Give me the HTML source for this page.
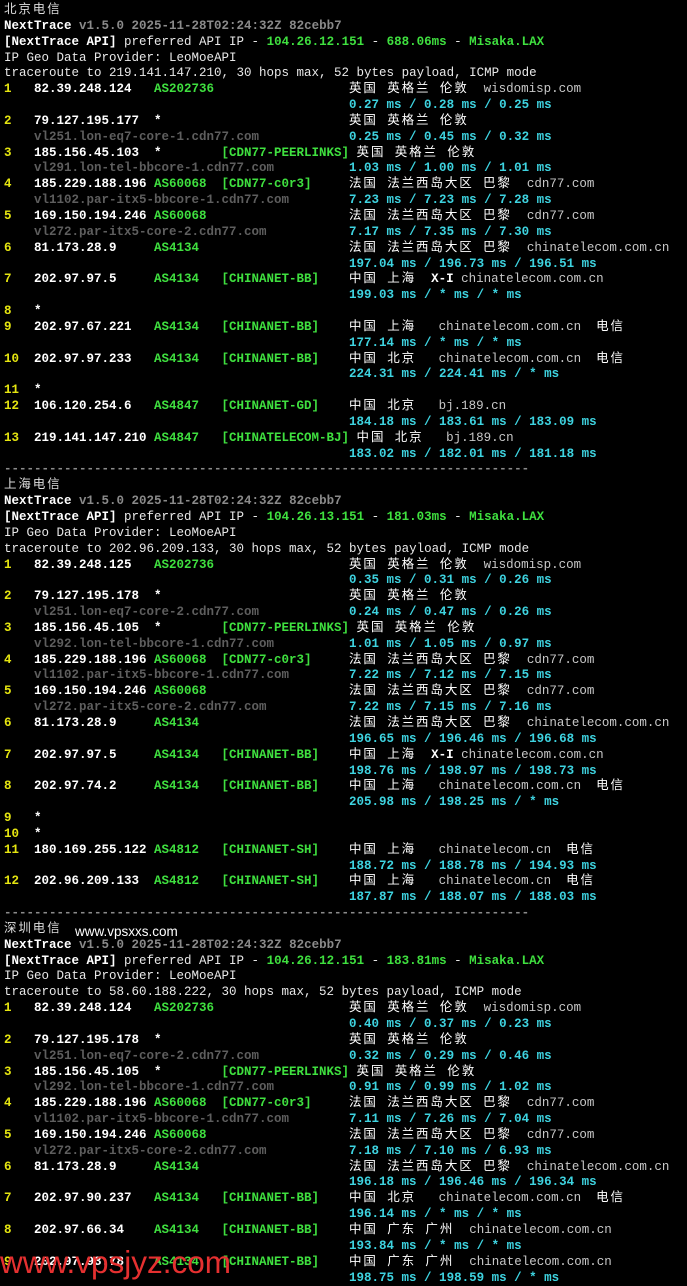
<!DOCTYPE html>
<html><head><meta charset="utf-8"><style>
body{margin:0;background:#000;width:687px;height:1280px;overflow:hidden;position:relative}
#t{position:absolute;left:4px;top:3px;font-family:"Liberation Mono","Noto Sans CJK SC",monospace;font-size:12.5px;line-height:15.857px;color:#e8e8e8}
.l{height:15.857px;white-space:pre;overflow:visible}
.y{color:#e5e510;font-weight:bold}
.w{color:#fff;font-weight:bold}
.g{color:#3fe03f;font-weight:bold}
.c{color:#3ed3e0;font-weight:bold}
.h{color:#c8c8c8}
.d{color:#5e5e5e;font-weight:bold}
.gr{color:#8a8a8a;font-weight:bold}
.z{letter-spacing:1.9px;color:#fff}
.n,.ip,.as,.br{display:inline-block}
.n{width:4ch}.ip{width:16ch}.as{width:9ch}.br{min-width:17ch}
.m{margin-left:46ch}.s{margin-left:4ch}
.sec{letter-spacing:1.9px;color:#ddd}
#wm{position:absolute;left:75px;top:924px;font-family:"Liberation Sans",sans-serif;font-size:13.5px;color:#fff}
#rd{position:absolute;left:0;top:1244px;font-family:"Liberation Sans",sans-serif;font-size:31.5px;color:#e53030}
</style></head><body><div id="t">
<div class="l"><span class="sec">北京电信</span></div>
<div class="l"><span class="w">NextTrace</span> <span class="gr">v1.5.0 2025-11-28T02:24:32Z 82cebb7</span></div>
<div class="l"><span class="w">[NextTrace API]</span> preferred API IP - <span class="g">104.26.12.151</span> - <span class="g">688.06ms</span> - <span class="g">Misaka.LAX</span></div>
<div class="l">IP Geo Data Provider: LeoMoeAPI</div>
<div class="l">traceroute to 219.141.147.210, 30 hops max, 52 bytes payload, ICMP mode</div>
<div class="l"><span class="n y">1</span><span class="ip w">82.39.248.124</span><span class="as g">AS202736</span><span class="br"></span><span class="z">英国 英格兰 伦敦</span>  <span class="h">wisdomisp.com</span></div>
<div class="l"><span class="m c">0.27 ms / 0.28 ms / 0.25 ms</span></div>
<div class="l"><span class="n y">2</span><span class="ip w">79.127.195.177</span><span class="as w">*</span><span class="br"></span><span class="z">英国 英格兰 伦敦</span></div>
<div class="l"><span class="s d">vl251.lon-eq7-core-1.cdn77.com</span><span style="margin-left:12ch" class="c">0.25 ms / 0.45 ms / 0.32 ms</span></div>
<div class="l"><span class="n y">3</span><span class="ip w">185.156.45.103</span><span class="as w">*</span><span class="br g">[CDN77-PEERLINKS] </span><span class="z">英国 英格兰 伦敦</span></div>
<div class="l"><span class="s d">vl291.lon-tel-bbcore-1.cdn77.com</span><span style="margin-left:10ch" class="c">1.03 ms / 1.00 ms / 1.01 ms</span></div>
<div class="l"><span class="n y">4</span><span class="ip w">185.229.188.196</span><span class="as g">AS60068</span><span class="br g">[CDN77-c0r3]</span><span class="z">法国 法兰西岛大区 巴黎</span>  <span class="h">cdn77.com</span></div>
<div class="l"><span class="s d">vl1102.par-itx5-bbcore-1.cdn77.com</span><span style="margin-left:8ch" class="c">7.23 ms / 7.23 ms / 7.28 ms</span></div>
<div class="l"><span class="n y">5</span><span class="ip w">169.150.194.246</span><span class="as g">AS60068</span><span class="br"></span><span class="z">法国 法兰西岛大区 巴黎</span>  <span class="h">cdn77.com</span></div>
<div class="l"><span class="s d">vl272.par-itx5-core-2.cdn77.com</span><span style="margin-left:11ch" class="c">7.17 ms / 7.35 ms / 7.30 ms</span></div>
<div class="l"><span class="n y">6</span><span class="ip w">81.173.28.9</span><span class="as g">AS4134</span><span class="br"></span><span class="z">法国 法兰西岛大区 巴黎</span>  <span class="h">chinatelecom.com.cn</span></div>
<div class="l"><span class="m c">197.04 ms / 196.73 ms / 196.51 ms</span></div>
<div class="l"><span class="n y">7</span><span class="ip w">202.97.97.5</span><span class="as g">AS4134</span><span class="br g">[CHINANET-BB]</span><span class="z">中国 上海</span>  <span class="w">X-I</span> <span class="h">chinatelecom.com.cn</span></div>
<div class="l"><span class="m c">199.03 ms / * ms / * ms</span></div>
<div class="l"><span class="n y">8</span><span class="w">*</span></div>
<div class="l"><span class="n y">9</span><span class="ip w">202.97.67.221</span><span class="as g">AS4134</span><span class="br g">[CHINANET-BB]</span><span class="z">中国 上海</span>   <span class="h">chinatelecom.com.cn</span>  <span class="z">电信</span></div>
<div class="l"><span class="m c">177.14 ms / * ms / * ms</span></div>
<div class="l"><span class="n y">10</span><span class="ip w">202.97.97.233</span><span class="as g">AS4134</span><span class="br g">[CHINANET-BB]</span><span class="z">中国 北京</span>   <span class="h">chinatelecom.com.cn</span>  <span class="z">电信</span></div>
<div class="l"><span class="m c">224.31 ms / 224.41 ms / * ms</span></div>
<div class="l"><span class="n y">11</span><span class="w">*</span></div>
<div class="l"><span class="n y">12</span><span class="ip w">106.120.254.6</span><span class="as g">AS4847</span><span class="br g">[CHINANET-GD]</span><span class="z">中国 北京</span>   <span class="h">bj.189.cn</span></div>
<div class="l"><span class="m c">184.18 ms / 183.61 ms / 183.09 ms</span></div>
<div class="l"><span class="n y">13</span><span class="ip w">219.141.147.210</span><span class="as g">AS4847</span><span class="br g">[CHINATELECOM-BJ] </span><span class="z">中国 北京</span>   <span class="h">bj.189.cn</span></div>
<div class="l"><span class="m c">183.02 ms / 182.01 ms / 181.18 ms</span></div>
<div class="l"><span class="gr">----------------------------------------------------------------------</span></div>
<div class="l"><span class="sec">上海电信</span></div>
<div class="l"><span class="w">NextTrace</span> <span class="gr">v1.5.0 2025-11-28T02:24:32Z 82cebb7</span></div>
<div class="l"><span class="w">[NextTrace API]</span> preferred API IP - <span class="g">104.26.13.151</span> - <span class="g">181.03ms</span> - <span class="g">Misaka.LAX</span></div>
<div class="l">IP Geo Data Provider: LeoMoeAPI</div>
<div class="l">traceroute to 202.96.209.133, 30 hops max, 52 bytes payload, ICMP mode</div>
<div class="l"><span class="n y">1</span><span class="ip w">82.39.248.125</span><span class="as g">AS202736</span><span class="br"></span><span class="z">英国 英格兰 伦敦</span>  <span class="h">wisdomisp.com</span></div>
<div class="l"><span class="m c">0.35 ms / 0.31 ms / 0.26 ms</span></div>
<div class="l"><span class="n y">2</span><span class="ip w">79.127.195.178</span><span class="as w">*</span><span class="br"></span><span class="z">英国 英格兰 伦敦</span></div>
<div class="l"><span class="s d">vl251.lon-eq7-core-2.cdn77.com</span><span style="margin-left:12ch" class="c">0.24 ms / 0.47 ms / 0.26 ms</span></div>
<div class="l"><span class="n y">3</span><span class="ip w">185.156.45.105</span><span class="as w">*</span><span class="br g">[CDN77-PEERLINKS] </span><span class="z">英国 英格兰 伦敦</span></div>
<div class="l"><span class="s d">vl292.lon-tel-bbcore-1.cdn77.com</span><span style="margin-left:10ch" class="c">1.01 ms / 1.05 ms / 0.97 ms</span></div>
<div class="l"><span class="n y">4</span><span class="ip w">185.229.188.196</span><span class="as g">AS60068</span><span class="br g">[CDN77-c0r3]</span><span class="z">法国 法兰西岛大区 巴黎</span>  <span class="h">cdn77.com</span></div>
<div class="l"><span class="s d">vl1102.par-itx5-bbcore-1.cdn77.com</span><span style="margin-left:8ch" class="c">7.22 ms / 7.12 ms / 7.15 ms</span></div>
<div class="l"><span class="n y">5</span><span class="ip w">169.150.194.246</span><span class="as g">AS60068</span><span class="br"></span><span class="z">法国 法兰西岛大区 巴黎</span>  <span class="h">cdn77.com</span></div>
<div class="l"><span class="s d">vl272.par-itx5-core-2.cdn77.com</span><span style="margin-left:11ch" class="c">7.22 ms / 7.15 ms / 7.16 ms</span></div>
<div class="l"><span class="n y">6</span><span class="ip w">81.173.28.9</span><span class="as g">AS4134</span><span class="br"></span><span class="z">法国 法兰西岛大区 巴黎</span>  <span class="h">chinatelecom.com.cn</span></div>
<div class="l"><span class="m c">196.65 ms / 196.46 ms / 196.68 ms</span></div>
<div class="l"><span class="n y">7</span><span class="ip w">202.97.97.5</span><span class="as g">AS4134</span><span class="br g">[CHINANET-BB]</span><span class="z">中国 上海</span>  <span class="w">X-I</span> <span class="h">chinatelecom.com.cn</span></div>
<div class="l"><span class="m c">198.76 ms / 198.97 ms / 198.73 ms</span></div>
<div class="l"><span class="n y">8</span><span class="ip w">202.97.74.2</span><span class="as g">AS4134</span><span class="br g">[CHINANET-BB]</span><span class="z">中国 上海</span>   <span class="h">chinatelecom.com.cn</span>  <span class="z">电信</span></div>
<div class="l"><span class="m c">205.98 ms / 198.25 ms / * ms</span></div>
<div class="l"><span class="n y">9</span><span class="w">*</span></div>
<div class="l"><span class="n y">10</span><span class="w">*</span></div>
<div class="l"><span class="n y">11</span><span class="ip w">180.169.255.122</span><span class="as g">AS4812</span><span class="br g">[CHINANET-SH]</span><span class="z">中国 上海</span>   <span class="h">chinatelecom.cn</span>  <span class="z">电信</span></div>
<div class="l"><span class="m c">188.72 ms / 188.78 ms / 194.93 ms</span></div>
<div class="l"><span class="n y">12</span><span class="ip w">202.96.209.133</span><span class="as g">AS4812</span><span class="br g">[CHINANET-SH]</span><span class="z">中国 上海</span>   <span class="h">chinatelecom.cn</span>  <span class="z">电信</span></div>
<div class="l"><span class="m c">187.87 ms / 188.07 ms / 188.03 ms</span></div>
<div class="l"><span class="gr">----------------------------------------------------------------------</span></div>
<div class="l"><span class="sec">深圳电信</span></div>
<div class="l"><span class="w">NextTrace</span> <span class="gr">v1.5.0 2025-11-28T02:24:32Z 82cebb7</span></div>
<div class="l"><span class="w">[NextTrace API]</span> preferred API IP - <span class="g">104.26.12.151</span> - <span class="g">183.81ms</span> - <span class="g">Misaka.LAX</span></div>
<div class="l">IP Geo Data Provider: LeoMoeAPI</div>
<div class="l">traceroute to 58.60.188.222, 30 hops max, 52 bytes payload, ICMP mode</div>
<div class="l"><span class="n y">1</span><span class="ip w">82.39.248.124</span><span class="as g">AS202736</span><span class="br"></span><span class="z">英国 英格兰 伦敦</span>  <span class="h">wisdomisp.com</span></div>
<div class="l"><span class="m c">0.40 ms / 0.37 ms / 0.23 ms</span></div>
<div class="l"><span class="n y">2</span><span class="ip w">79.127.195.178</span><span class="as w">*</span><span class="br"></span><span class="z">英国 英格兰 伦敦</span></div>
<div class="l"><span class="s d">vl251.lon-eq7-core-2.cdn77.com</span><span style="margin-left:12ch" class="c">0.32 ms / 0.29 ms / 0.46 ms</span></div>
<div class="l"><span class="n y">3</span><span class="ip w">185.156.45.105</span><span class="as w">*</span><span class="br g">[CDN77-PEERLINKS] </span><span class="z">英国 英格兰 伦敦</span></div>
<div class="l"><span class="s d">vl292.lon-tel-bbcore-1.cdn77.com</span><span style="margin-left:10ch" class="c">0.91 ms / 0.99 ms / 1.02 ms</span></div>
<div class="l"><span class="n y">4</span><span class="ip w">185.229.188.196</span><span class="as g">AS60068</span><span class="br g">[CDN77-c0r3]</span><span class="z">法国 法兰西岛大区 巴黎</span>  <span class="h">cdn77.com</span></div>
<div class="l"><span class="s d">vl1102.par-itx5-bbcore-1.cdn77.com</span><span style="margin-left:8ch" class="c">7.11 ms / 7.26 ms / 7.04 ms</span></div>
<div class="l"><span class="n y">5</span><span class="ip w">169.150.194.246</span><span class="as g">AS60068</span><span class="br"></span><span class="z">法国 法兰西岛大区 巴黎</span>  <span class="h">cdn77.com</span></div>
<div class="l"><span class="s d">vl272.par-itx5-core-2.cdn77.com</span><span style="margin-left:11ch" class="c">7.18 ms / 7.10 ms / 6.93 ms</span></div>
<div class="l"><span class="n y">6</span><span class="ip w">81.173.28.9</span><span class="as g">AS4134</span><span class="br"></span><span class="z">法国 法兰西岛大区 巴黎</span>  <span class="h">chinatelecom.com.cn</span></div>
<div class="l"><span class="m c">196.18 ms / 196.46 ms / 196.34 ms</span></div>
<div class="l"><span class="n y">7</span><span class="ip w">202.97.90.237</span><span class="as g">AS4134</span><span class="br g">[CHINANET-BB]</span><span class="z">中国 北京</span>   <span class="h">chinatelecom.com.cn</span>  <span class="z">电信</span></div>
<div class="l"><span class="m c">196.14 ms / * ms / * ms</span></div>
<div class="l"><span class="n y">8</span><span class="ip w">202.97.66.34</span><span class="as g">AS4134</span><span class="br g">[CHINANET-BB]</span><span class="z">中国 广东 广州</span>  <span class="h">chinatelecom.com.cn</span></div>
<div class="l"><span class="m c">193.84 ms / * ms / * ms</span></div>
<div class="l"><span class="n y">9</span><span class="ip w">202.97.93.78</span><span class="as g">AS4134</span><span class="br g">[CHINANET-BB]</span><span class="z">中国 广东 广州</span>  <span class="h">chinatelecom.com.cn</span></div>
<div class="l"><span class="m c">198.75 ms / 198.59 ms / * ms</span></div>
</div>
<div id="wm">www.vpsxxs.com</div>
<div id="rd">www.vpsjyz.com</div>
</body></html>
